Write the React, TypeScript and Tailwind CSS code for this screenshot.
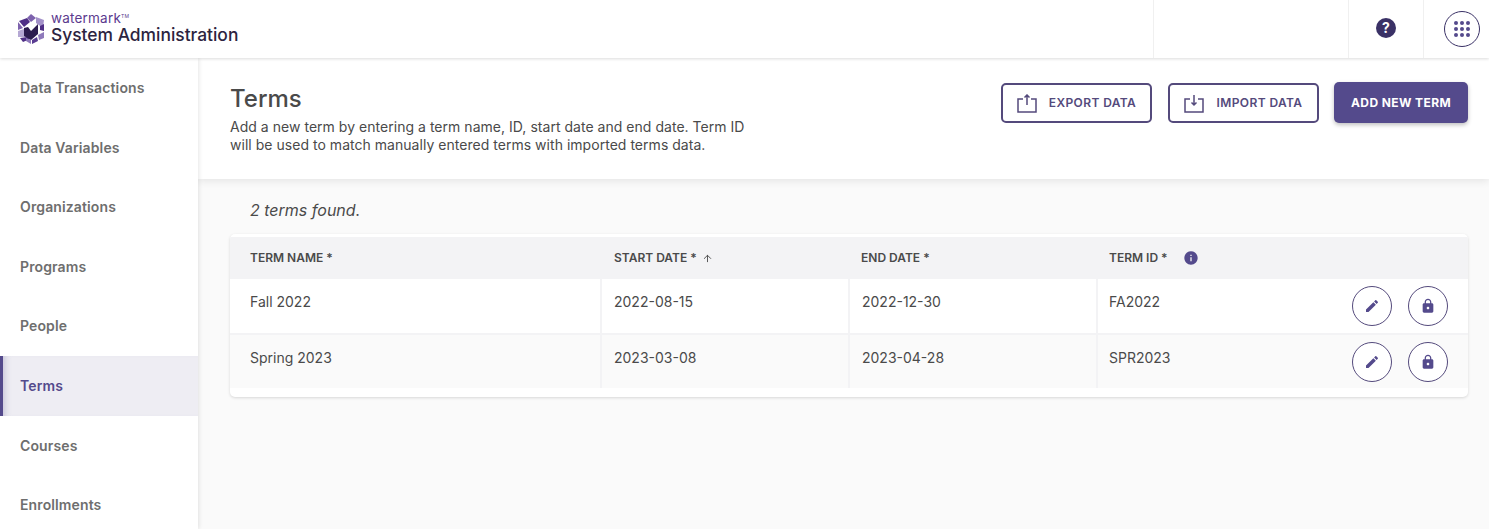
import { ArrowUp } from 'lucide-react';

const navItems = ['Data Transactions', 'Data Variables', 'Organizations', 'Programs', 'People', 'Terms', 'Courses', 'Enrollments'];

const terms = [
  { name: 'Fall 2022', start: '2022-08-15', end: '2022-12-30', id: 'FA2022' },
  { name: 'Spring 2023', start: '2023-03-08', end: '2023-04-28', id: 'SPR2023' },
];

function Logo() {
  return (
    <svg width="26" height="30" viewBox="0 0 26 30">
      <path d="M13 0l5 4-5 4-4-4z" fill="#7d62ad" />
      <path d="M18 3l8 3-1 8-7-5z" fill="#a391c9" />
      <path d="M1 7l8-3 3 4-6 5z" fill="#4f2f86" />
      <path d="M0 8l5 6-5 2z" fill="#7d62ad" />
      <path d="M0 17l6-2 2 8-8 0z" fill="#b5a8d4" />
      <path d="M2 24l7-1 3 2-7 3z" fill="#4f2f86" />
      <path d="M8 24l5 2v4l-5-3z" fill="#8f7abb" />
      <path d="M14 26l5-3 1 4-6 3z" fill="#5a3c92" />
      <path d="M20 21l6-3v6l-5 2z" fill="#8f7abb" />
      <path d="M22 12l4-2v7l-4-1z" fill="#4f2f86" />
      <path d="M6 14l4-1 3 4 7-7v10l-7 6-7-4z" fill="#2c1c4f" />
    </svg>
  );
}

function EditIcon() {
  return (
    <svg width="16" height="16" viewBox="0 0 24 24" fill="#544a8c">
      <path d="M3 17.25V21h3.75L17.81 9.94l-3.75-3.75L3 17.25zM20.71 7.04c.39-.39.39-1.02 0-1.41l-2.34-2.34c-.39-.39-1.02-.39-1.41 0l-1.83 1.83 3.75 3.75 1.83-1.83z" />
    </svg>
  );
}

function LockIcon() {
  return (
    <svg width="16" height="16" viewBox="0 0 24 24" fill="#544a8c">
      <path d="M18 8h-1V6c0-2.76-2.24-5-5-5S7 3.24 7 6v2H6c-1.1 0-2 .9-2 2v10c0 1.1.9 2 2 2h12c1.1 0 2-.9 2-2V10c0-1.1-.9-2-2-2zm-6 9c-1.1 0-2-.9-2-2s.9-2 2-2 2 .9 2 2-.9 2-2 2zm3.1-9H8.9V6c0-1.71 1.39-3.1 3.1-3.1 1.71 0 3.1 1.39 3.1 3.1v2z" />
    </svg>
  );
}

function InfoIcon() {
  return (
    <svg width="16" height="16" viewBox="0 0 24 24" fill="#544a8c">
      <path d="M12 2C6.48 2 2 6.48 2 12s4.48 10 10 10 10-4.48 10-10S17.52 2 12 2zm1 15h-2v-6h2v6zm0-8h-2V7h2v2z" />
    </svg>
  );
}

export default function App() {
  return (
    <div className="h-[529px] w-[1489px] overflow-hidden bg-[#fafafa] font-['Inter',sans-serif]">
      <header className="relative z-20 flex h-[58px] items-stretch bg-white shadow-[0_1px_3px_rgba(0,0,0,0.14)]">
        <div className="flex flex-1 items-center pl-[18px]">
          <Logo />
          <div className="-mt-[2px] ml-[7px] flex flex-col">
            <span className="text-[13.5px] leading-[13px] tracking-[0.2px] text-[#5b3a8e]">
              watermark<span className="align-top text-[5px] leading-[8px]">TM</span>
            </span>
            <span className="text-[17.4px] font-medium leading-[20px] text-[#2c2440]">System Administration</span>
          </div>
        </div>
        <div className="w-[195px] border-l border-[#f0f0f0]" />
        <div className="flex w-[75px] items-center justify-center border-l border-[#f0f0f0] pb-[2px]">
          <span className="flex h-5 w-5 items-center justify-center rounded-full bg-[#3a3166] text-[14px] font-bold leading-none text-white">?</span>
        </div>
        <div className="flex w-[66px] items-center border-l border-[#f0f0f0] pl-5">
          <div className="flex h-9 w-9 items-center justify-center rounded-full border border-[#3a3166]">
            <div className="grid grid-cols-3 gap-[2px]">
              {Array.from({ length: 9 }).map((_, i) => (
                <span key={i} className="h-[4px] w-[4px] rounded-full bg-[#544a8c]" />
              ))}
            </div>
          </div>
        </div>
      </header>

      <div className="flex h-[471px]">
        <nav className="relative z-10 w-[198px] shrink-0 bg-white shadow-[1px_0_4px_rgba(0,0,0,0.1)]">
          {navItems.map((item) =>
            item === 'Terms' ? (
              <div key={item} className="flex h-[60px] items-center border-l-[3px] border-[#544a8c] bg-[#eeedf3] pl-[17px] text-[14px] font-semibold tracking-[0.12px] text-[#544a8c] shadow-[inset_7px_0_6px_-5px_rgba(84,74,140,0.25)]">
                {item}
              </div>
            ) : (
              <div key={item} className="flex h-[59.5px] items-center pl-5 text-[14px] font-semibold tracking-[0.12px] text-[#6e6e6e]">
                {item}
              </div>
            ),
          )}
        </nav>

        <main className="min-w-0 flex-1">
          <section className="flex h-[121px] items-start justify-between bg-white pl-[32px] pr-[21px] pt-[24px] shadow-[0_2px_8px_rgba(0,0,0,0.09)]">
            <div className="pt-[1px]">
              <h1 className="text-[24px] font-medium leading-[32px] text-[#4a4a4a]">Terms</h1>
              <p className="mt-[3px] w-[530px] text-[14px] leading-[18px] tracking-[0.03px] text-[#4a4a4a]">
                Add a new term by entering a term name, ID, start date and end date. Term ID will be used to match manually entered terms with imported terms data.
              </p>
            </div>
            <div className="flex h-[41px] items-end">
              <button className="flex h-10 w-[151px] items-center justify-center gap-3 rounded-[5px] border-2 border-[#544a7c] bg-white text-[12px] font-semibold tracking-[0.4px] text-[#544a7c]">
                <svg width="20" height="19" viewBox="0 0 20 19" fill="none" stroke="#544a7c" strokeWidth="1.5">
                  <path d="M6 5H1v13h18V5h-5" />
                  <path d="M10 11V1M7.5 3.5L10 1l2.5 2.5" />
                </svg>
                EXPORT DATA
              </button>
              <button className="ml-4 flex h-10 w-[151px] items-center justify-center gap-3 rounded-[5px] border-2 border-[#544a7c] bg-white text-[12px] font-semibold tracking-[0.4px] text-[#544a7c]">
                <svg width="20" height="19" viewBox="0 0 20 19" fill="none" stroke="#544a7c" strokeWidth="1.5">
                  <path d="M6 5H1v13h18V5h-5" />
                  <path d="M10 1v10M7.5 8.5L10 11l2.5-2.5" />
                </svg>
                IMPORT DATA
              </button>
              <button className="ml-[15px] flex h-[41px] w-[134px] items-center justify-center rounded-[5px] bg-[#544a8c] text-[12px] font-bold tracking-[0.4px] text-white shadow-[0_2px_4px_rgba(0,0,0,0.25)]">
                ADD NEW TERM
              </button>
            </div>
          </section>

          <div className="pl-[32px] pr-[21px]">
            <p className="pl-5 pt-[21px] text-[16px] italic leading-[20px] text-[#4a4a4a]">2 terms found.</p>
            <div className="mt-[14px] overflow-hidden rounded-[5px] bg-white pb-[9px] pt-[3px] shadow-[0_1px_3px_rgba(0,0,0,0.14)]">
              <div className="grid h-[42px] grid-cols-[370px_248px_248px_1fr] items-center bg-[#f3f3f5] text-[12px] font-semibold text-[#4a4a4a]">
                <span className="pl-5">TERM NAME *</span>
                <span className="flex items-center gap-[5px] pl-[14px]">
                  START DATE *
                  <ArrowUp size={11} />
                </span>
                <span className="pl-[13px]">END DATE *</span>
                <span className="flex items-center gap-[15px] pl-[13px]">
                  TERM ID *
                  <InfoIcon />
                </span>
              </div>
              {terms.map((term, i) => (
                <div
                  key={term.id}
                  className={`grid grid-cols-[370px_248px_248px_1fr] text-[14px] text-[#4a4a4a] ${i === 1 ? 'h-[53px] bg-[#fafafa]' : 'h-[56px] border-b-2 border-[#f3f3f5] bg-white'}`}
                >
                  <span className="pl-5 pt-3">{term.name}</span>
                  <span className="border-l-2 border-[#f3f3f5] pl-3 pt-3">{term.start}</span>
                  <span className="border-l-2 border-[#f3f3f5] pl-3 pt-3">{term.end}</span>
                  <div className="flex items-center justify-between border-l-2 border-[#f3f3f5] pl-[11px] pr-5">
                    <span className="self-start pt-3">{term.id}</span>
                    <div className="flex gap-4">
                      <button className="flex h-10 w-10 items-center justify-center rounded-full border border-[#544a7c] bg-white">
                        <EditIcon />
                      </button>
                      <button className="flex h-10 w-10 items-center justify-center rounded-full border border-[#544a7c] bg-white">
                        <LockIcon />
                      </button>
                    </div>
                  </div>
                </div>
              ))}
            </div>
          </div>
        </main>
      </div>
    </div>
  );
}
